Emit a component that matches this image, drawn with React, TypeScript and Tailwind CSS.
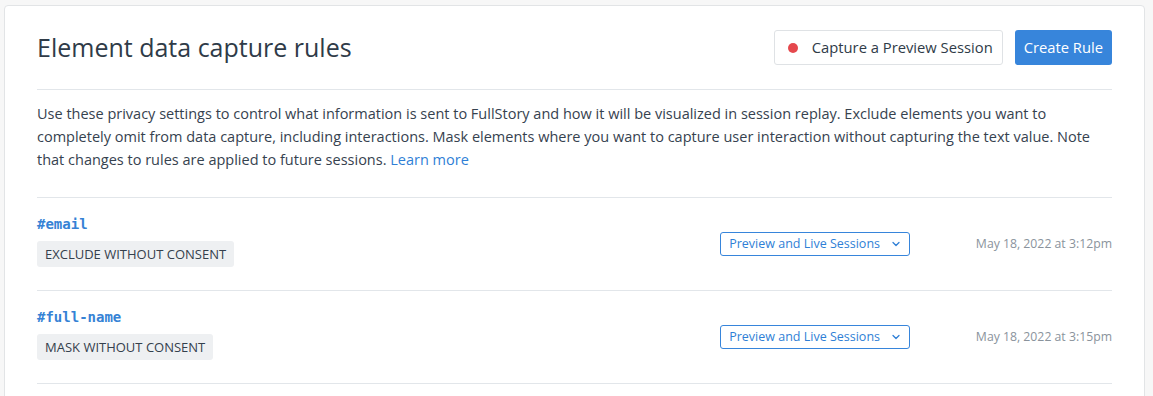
import { ChevronDown } from "lucide-react";

const rules = [
  { selector: "#email", mode: "EXCLUDE WITHOUT CONSENT", date: "May 18, 2022 at 3:12pm" },
  { selector: "#full-name", mode: "MASK WITHOUT CONSENT", date: "May 18, 2022 at 3:15pm" },
];

export default function App() {
  return (
    <div className="h-[396px] overflow-hidden bg-[#f7f7f7] pl-[4px] pr-[8px] pt-[5px] font-['Open_Sans',sans-serif] text-[#34404d]">
      <div className="h-[420px] rounded-[4px] border border-[#e2e4e6] bg-white px-[32px]">
        <div className="flex h-[84px] items-center justify-between border-b border-[#e2e6ea]">
          <h1 className="text-[25px] leading-none text-[#2f3b48]">Element data capture rules</h1>
          <div className="flex items-center gap-[12px]">
            <button className="flex h-[35px] items-center gap-[14px] rounded-[3px] border border-[#dfe2e5] bg-white pl-[13px] pr-[9px] text-[14.75px] text-[#2f3b48]">
              <span className="h-[10px] w-[10px] rounded-full bg-[#e5484d]" />
              Capture a Preview Session
            </button>
            <button className="h-[35px] rounded-[3px] bg-[#3785db] px-[9px] text-[14.75px] text-white">Create Rule</button>
          </div>
        </div>
        <p className="border-b border-[#e2e6ea] pb-[26px] pt-[12px] text-[14.5px] leading-[23px] text-[#36424f]">
          Use these privacy settings to control what information is sent to FullStory and how it will be visualized in session replay. Exclude elements you want to completely omit from data capture, including interactions. Mask elements where you want to capture user interaction without capturing the text value. Note that changes to rules are applied to future sessions.{" "}
          <a className="text-[#2f7fd6]">Learn more</a>
        </p>
        {rules.map((rule) => (
          <div key={rule.selector} className="flex h-[93px] items-center border-b border-[#e2e6ea]">
            <div className="mb-[6px] flex-1">
              <div className="font-['DejaVu_Sans_Mono',monospace] text-[14px] font-bold leading-[18px] text-[#3582d5]">{rule.selector}</div>
              <span className="mt-[8px] inline-block rounded-[3px] bg-[#eef0f2] px-[8px] py-[5px] text-[13px] leading-[16px] text-[#34404d]">
                {rule.mode}
              </span>
            </div>
            <button className="flex h-[24px] items-center gap-[10px] rounded-[3px] border border-[#3785db] pl-[8px] pr-[7px] text-[12.5px] text-[#2f7fd6]">
              Preview and Live Sessions
              <ChevronDown size={12} strokeWidth={2.5} />
            </button>
            <div className="w-[202px] text-right text-[12.25px] text-[#8a939c]">{rule.date}</div>
          </div>
        ))}
      </div>
    </div>
  );
}
